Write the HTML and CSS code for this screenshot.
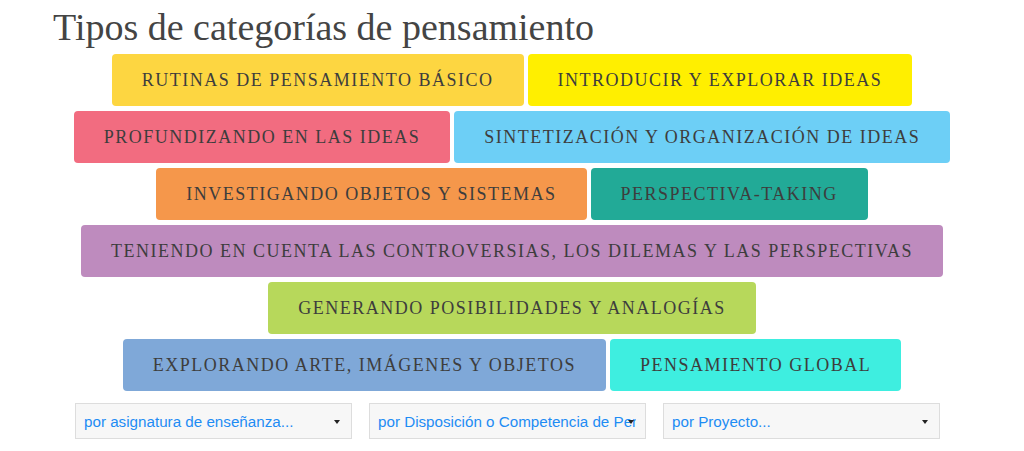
FILE: index.html
```html
<!DOCTYPE html>
<html lang="es">
<head>
<meta charset="utf-8">
<title>Tipos de categorías de pensamiento</title>
<link rel="stylesheet" href="styles.css">
</head>
<body>
<h1 class="title">Tipos de categorías de pensamiento</h1>
<div class="cats">
  <div class="row">
    <a class="cat c-rutinas">RUTINAS DE PENSAMIENTO BÁSICO</a>
    <a class="cat c-introducir">INTRODUCIR Y EXPLORAR IDEAS</a>
  </div>
  <div class="row">
    <a class="cat c-profund">PROFUNDIZANDO EN LAS IDEAS</a>
    <a class="cat c-sintet">SINTETIZACIÓN Y ORGANIZACIÓN DE IDEAS</a>
  </div>
  <div class="row">
    <a class="cat c-invest">INVESTIGANDO OBJETOS Y SISTEMAS</a>
    <a class="cat c-persp">PERSPECTIVA-TAKING</a>
  </div>
  <div class="row">
    <a class="cat c-teniendo">TENIENDO EN CUENTA LAS CONTROVERSIAS, LOS DILEMAS Y LAS PERSPECTIVAS</a>
  </div>
  <div class="row">
    <a class="cat c-generando">GENERANDO POSIBILIDADES Y ANALOGÍAS</a>
  </div>
  <div class="row">
    <a class="cat c-arte">EXPLORANDO ARTE, IMÁGENES Y OBJETOS</a>
    <a class="cat c-global">PENSAMIENTO GLOBAL</a>
  </div>
</div>
<div class="filters">
  <div class="select"><span class="label">por asignatura de enseñanza...</span><span class="arrow"></span></div>
  <div class="select"><span class="label">por Disposición o Competencia de Pensamiento...</span><span class="arrow"></span></div>
  <div class="select"><span class="label">por Proyecto...</span><span class="arrow"></span></div>
</div>
</body>
</html>
```
FILE: styles.css
```css
html, body {
  margin: 0;
  padding: 0;
  background: #ffffff;
}
body {
  width: 1024px;
  height: 451px;
  overflow: hidden;
}
.title {
  margin: 0;
  padding: 7px 0 0 53px;
  font-family: "Liberation Serif", "Times New Roman", serif;
  font-weight: normal;
  font-size: 38px;
  line-height: 40px;
  color: #444444;
  height: 47px;
}
.cats {
  display: flex;
  flex-direction: column;
  gap: 5px;
}
.row {
  display: flex;
  justify-content: center;
  gap: 4px;
}
.cat {
  display: flex;
  align-items: center;
  height: 52px;
  padding: 0 30px;
  border-radius: 4px;
  font-family: "Liberation Serif", "Times New Roman", serif;
  font-size: 18px;
  letter-spacing: 1.5px;
  color: #3d3d3d;
  white-space: nowrap;
}
.c-rutinas { background: #fdd641; }
.c-introducir { background: #ffef00; }
.c-profund { background: #f26c80; }
.c-sintet { background: #6dcff6; }
.c-invest { background: #f5974b; }
.c-persp { background: #22aa97; }
.c-teniendo { background: #be8bbe; }
.c-generando { background: #b7d85b; }
.c-arte { background: #7fa8d8; }
.c-global { background: #3eeee0; }

.filters {
  display: flex;
  gap: 17px;
  padding: 12px 0 0 75px;
}
.select {
  position: relative;
  box-sizing: border-box;
  width: 277px;
  height: 36px;
  border: 1px solid #dddddd;
  background: #f7f7f7;
  display: flex;
  align-items: center;
  padding: 0 9px 0 8px;
}
.label {
  font-family: "Liberation Sans", Arial, sans-serif;
  font-size: 15.2px;
  color: #1e8cf4;
  white-space: nowrap;
  overflow: hidden;
  min-width: 0;
}
.arrow {
  position: absolute;
  right: 11px;
  top: 16px;
  width: 0;
  height: 0;
  border-left: 3px solid transparent;
  border-right: 3px solid transparent;
  border-top: 4px solid #222222;
}
```
